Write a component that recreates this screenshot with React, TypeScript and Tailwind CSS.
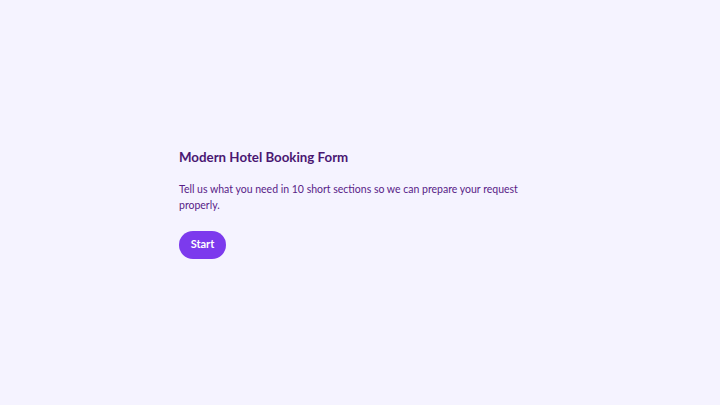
import React from 'react';

const App: React.FC = () => {
  return (
    <div
      className="min-h-screen w-full bg-[#f5f3ff] flex items-center justify-center"
      style={{ fontFamily: 'Lato, "Noto Sans", sans-serif' }}
    >
      <div className="w-[362px]">
        <h1 className="text-[13.3px] leading-5 font-bold text-[#4a1772]">Modern Hotel Booking Form</h1>
        <p className="mt-[14px] text-[10.5px] leading-4 text-[#581c87]">
          Tell us what you need in 10 short sections so we can prepare your request properly.
        </p>
        <button className="mt-[18px] h-7 w-[47px] rounded-full bg-[#7c3aed] text-white text-[11px] font-bold">
          Start
        </button>
      </div>
    </div>
  );
};

export default App;
